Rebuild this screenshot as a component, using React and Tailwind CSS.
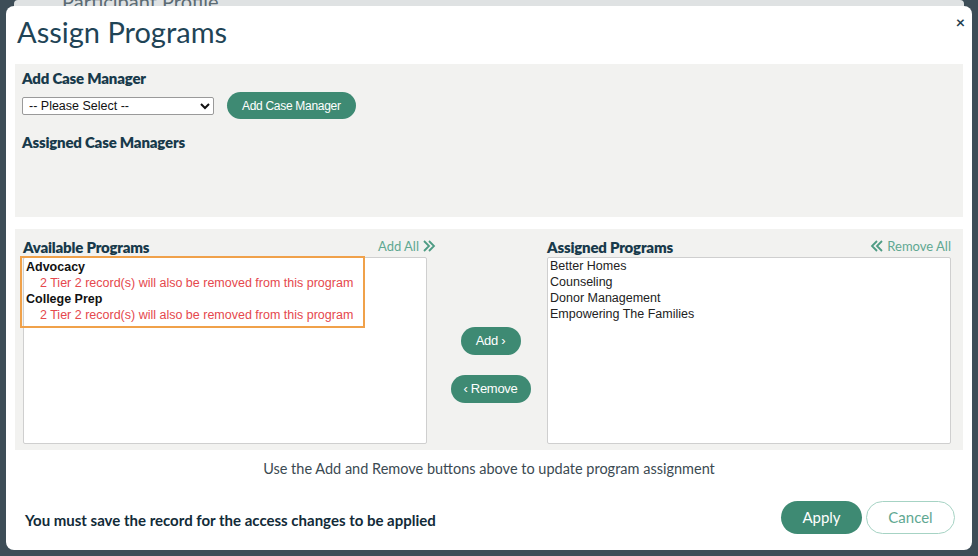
import React, { useState } from "react";

const available = [
  { name: "Advocacy", note: "2 Tier 2 record(s) will also be removed from this program" },
  { name: "College Prep", note: "2 Tier 2 record(s) will also be removed from this program" },
];

const assigned = ["Better Homes", "Counseling", "Donor Management", "Empowering The Families"];

const heading = "text-[15px] leading-[18px] font-extrabold text-[#183a4b] tracking-[-0.2px]";

const AssignPrograms = () => {
  const [manager, setManager] = useState("");

  return (
    <div className="w-[978px] h-[556px] bg-[#3d4d57] flex flex-col overflow-hidden font-['Lato',sans-serif]">
      {/* page behind the dialog */}
      <div className="h-[6px] mx-[14px] bg-[#dfe2e3] overflow-hidden pl-[48px] rounded-t">
        <div className="-mt-[14px] text-[20px] text-[#5b6b73]">Participant Profile</div>
      </div>

      <div className="flex-1 ml-[6px] mr-[6px] mb-[6px] bg-white rounded-[8px] flex flex-col px-[9px]">
        <div className="flex items-start justify-between h-[58px]">
          <h1 className="pl-[2px] pt-[9px] text-[29px] leading-[34px] text-[#1f4456]">
            Assign Programs
          </h1>
          <button className="mt-[8px] mr-[-2px] text-[16px] leading-none text-[#1f3e4d] font-bold">×</button>
        </div>

        <section className="bg-[#f2f2f0] h-[153px] px-[7px] pt-[5px]">
          <h3 className={heading}>Add Case Manager</h3>
          <div className="flex items-center gap-[13px] mt-[5px]">
            <select
              value={manager}
              onChange={(e) => setManager(e.target.value)}
              className="w-[192px] h-[18px] border border-[#9a9a9a] bg-white text-[12.5px] leading-[16px] px-[2px] font-['Liberation_Sans',sans-serif] text-[#111] rounded-[2px]"
            >
              <option value="">-- Please Select --</option>
            </select>
            <button className="h-[27px] px-[15px] rounded-full bg-[#3e8a73] text-white text-[12px] tracking-[-0.3px] font-['Liberation_Sans',sans-serif]">
              Add Case Manager
            </button>
          </div>
          <h3 className={`${heading} mt-[14px]`}>Assigned Case Managers</h3>
        </section>

        <section className="bg-[#f2f2f0] h-[221px] mt-[12px] px-[8px] pt-[9px] flex flex-col">
          <div className="flex flex-1 pb-[6px]">
            <div className="w-[404px] flex flex-col">
              <div className="flex items-end justify-between h-[18px]">
                <h3 className={heading}>Available Programs</h3>
                <span className="text-[13px] text-[#5fa892] mr-[-9px] flex items-center">
                  Add All
                  <svg width="14" height="12" viewBox="0 0 14 12" className="ml-[3px]" fill="none" stroke="#4e9c84" strokeWidth="1.8">
                    <path d="M2 1l5 5-5 5M7 1l5 5-5 5" />
                  </svg>
                </span>
              </div>
              <div className="flex-1 bg-white border border-[#cfcfcf] rounded-[2px] mt-[1px] font-['Liberation_Sans',sans-serif] text-[12.5px] leading-[16px]">
                <div className="border-2 border-[#f0a14a] w-[345px] -ml-[4px] -mt-[2px] pl-[4px] pt-[1px] pb-[3px]">
                  {available.map((p) => (
                    <div key={p.name}>
                      <div className="font-bold text-[#111]">{p.name}</div>
                      <div className="pl-[14px] text-[#e5484d]">{p.note}</div>
                    </div>
                  ))}
                </div>
              </div>
            </div>

            <div className="w-[120px] flex flex-col items-center justify-start pt-[89px] pl-[7px] gap-[20px] font-['Liberation_Sans',sans-serif]">
              <button className="h-[28px] w-[60px] rounded-full bg-[#3e8a73] text-white text-[13px] tracking-[-0.3px]">Add ›</button>
              <button className="h-[28px] w-[80px] rounded-full bg-[#3e8a73] text-white text-[13px] tracking-[-0.3px]">‹ Remove</button>
            </div>

            <div className="w-[404px] flex flex-col">
              <div className="flex items-end justify-between h-[18px]">
                <h3 className={heading}>Assigned Programs</h3>
                <span className="text-[13px] text-[#5fa892] flex items-center">
                  <svg width="14" height="12" viewBox="0 0 14 12" className="mr-[3px]" fill="none" stroke="#4e9c84" strokeWidth="1.8">
                    <path d="M12 1L7 6l5 5M7 1L2 6l5 5" />
                  </svg>
                  Remove All
                </span>
              </div>
              <div className="flex-1 bg-white border border-[#cfcfcf] rounded-[2px] mt-[1px] pl-[2px] font-['Liberation_Sans',sans-serif] text-[12.5px] leading-[16px] text-[#222]">
                {assigned.map((p) => (
                  <div key={p}>{p}</div>
                ))}
              </div>
            </div>
          </div>
        </section>

        <p className="text-center text-[14.5px] text-[#3b4a52] mt-[8px]">
          Use the Add and Remove buttons above to update program assignment
        </p>

        <div className="flex items-center justify-between mt-[21px] pl-[10px] pr-[8px]">
          <span className="pt-[5px] text-[15px] font-bold text-[#122b38]">
            You must save the record for the access changes to be applied
          </span>
          <div className="flex gap-[4px]">
            <button className="h-[33px] w-[81px] rounded-full bg-[#3e8a73] text-white text-[15px]">Apply</button>
            <button className="h-[33px] w-[89px] rounded-full border border-[#a6d3c4] bg-white text-[#5fa892] text-[15px]">
              Cancel
            </button>
          </div>
        </div>
      </div>
    </div>
  );
};

export default AssignPrograms;
